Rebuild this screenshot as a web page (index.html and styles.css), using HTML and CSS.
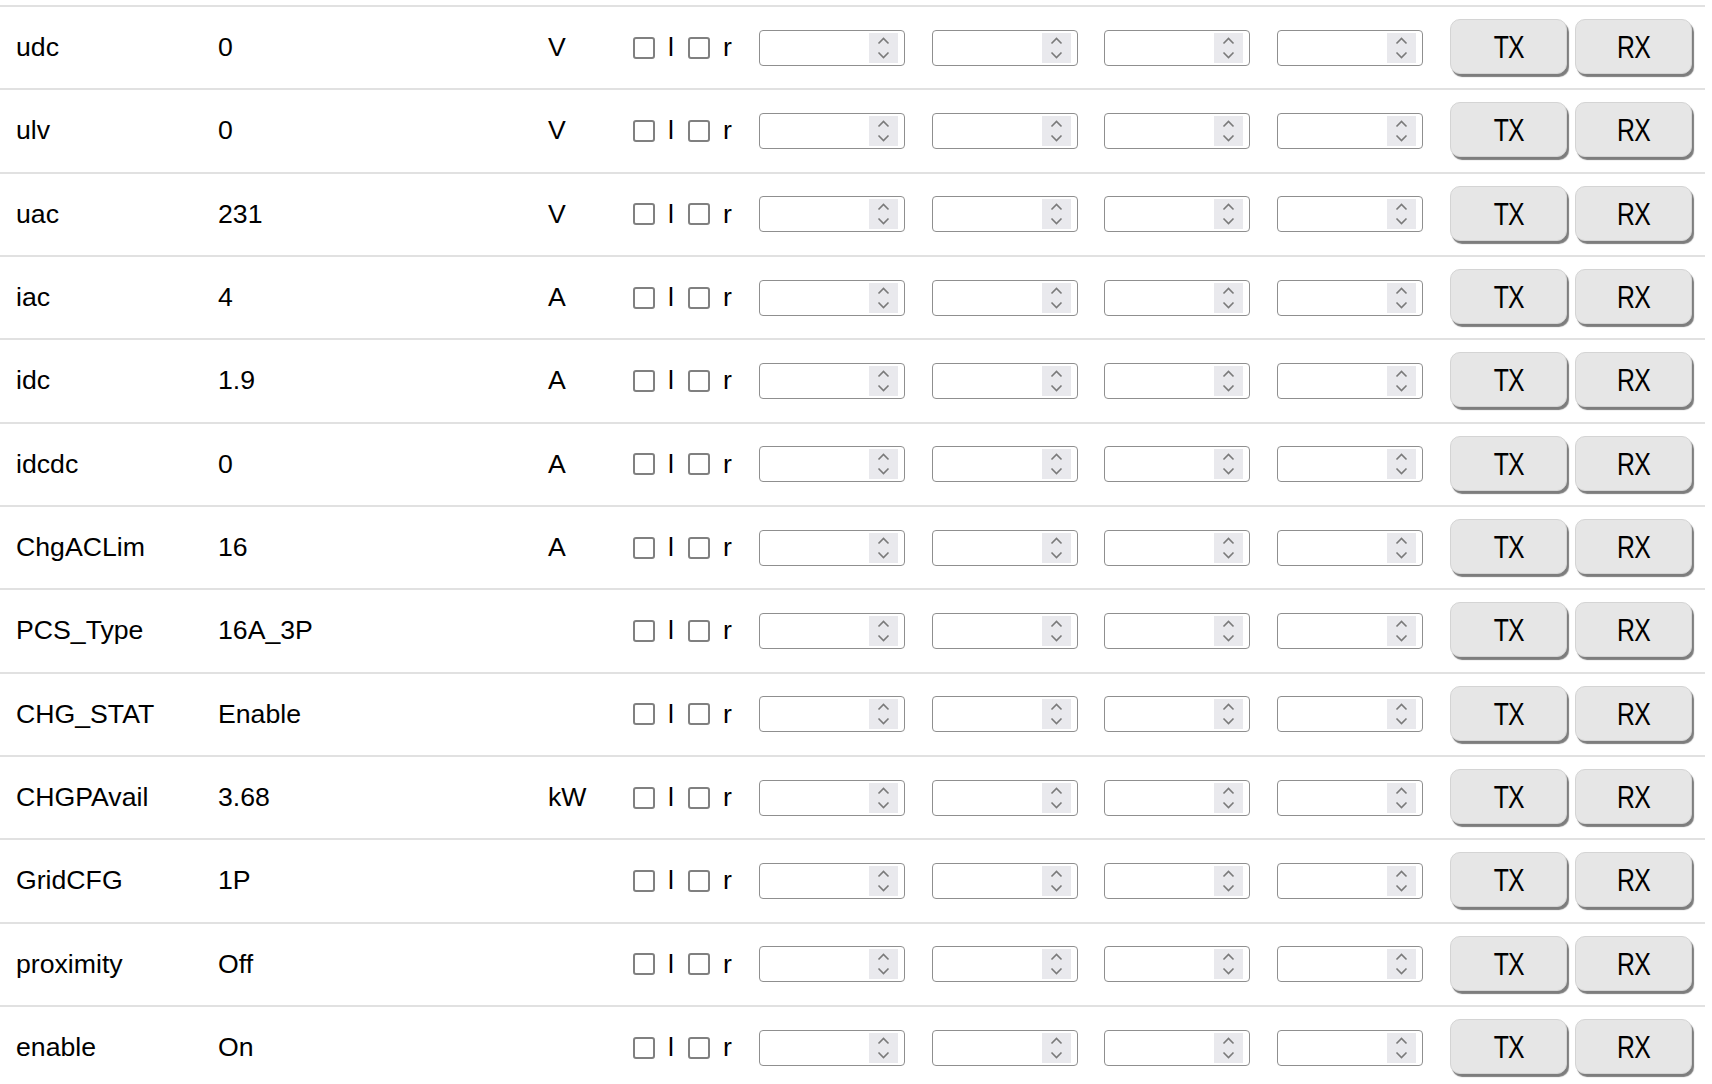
FILE: index.html
```html
<!DOCTYPE html>
<html>
<head>
<meta charset="utf-8">
<link rel="stylesheet" href="styles.css">
</head>
<body>
<div class="table">
  <div class="row"><div class="c name">udc</div><div class="c value">0</div><div class="c unit">V</div><div class="c flags"><label class="flag"><input type="checkbox" class="cb">l</label><label class="flag"><input type="checkbox" class="cb">r</label></div><div class="c field"><div class="num"><input type="number" class="numin"><span class="spin"><svg width="29" height="30" viewBox="0 0 29 30"><path d="M9.5 10.5L14.5 5.5L19.5 10.5M9.5 19.5L14.5 24.5L19.5 19.5" fill="none" stroke="#7a7a7a" stroke-width="1.6"/></svg></span></div></div><div class="c field"><div class="num"><input type="number" class="numin"><span class="spin"><svg width="29" height="30" viewBox="0 0 29 30"><path d="M9.5 10.5L14.5 5.5L19.5 10.5M9.5 19.5L14.5 24.5L19.5 19.5" fill="none" stroke="#7a7a7a" stroke-width="1.6"/></svg></span></div></div><div class="c field"><div class="num"><input type="number" class="numin"><span class="spin"><svg width="29" height="30" viewBox="0 0 29 30"><path d="M9.5 10.5L14.5 5.5L19.5 10.5M9.5 19.5L14.5 24.5L19.5 19.5" fill="none" stroke="#7a7a7a" stroke-width="1.6"/></svg></span></div></div><div class="c field"><div class="num"><input type="number" class="numin"><span class="spin"><svg width="29" height="30" viewBox="0 0 29 30"><path d="M9.5 10.5L14.5 5.5L19.5 10.5M9.5 19.5L14.5 24.5L19.5 19.5" fill="none" stroke="#7a7a7a" stroke-width="1.6"/></svg></span></div></div><div class="c actions"><button class="btn"><span class="btxt">TX</span></button><button class="btn"><span class="btxt">RX</span></button></div></div>
</div>
<script src="rows.js"></script>
</body>
</html>
```

FILE: rows.js
```js
(function () {
  var data = [
    ["ulv", "0", "V"],
    ["uac", "231", "V"],
    ["iac", "4", "A"],
    ["idc", "1.9", "A"],
    ["idcdc", "0", "A"],
    ["ChgACLim", "16", "A"],
    ["PCS_Type", "16A_3P", ""],
    ["CHG_STAT", "Enable", ""],
    ["CHGPAvail", "3.68", "kW"],
    ["GridCFG", "1P", ""],
    ["proximity", "Off", ""],
    ["enable", "On", ""]
  ];
  var table = document.querySelector(".table");
  var tpl = table.querySelector(".row");
  data.forEach(function (d) {
    var r = tpl.cloneNode(true);
    r.querySelector(".name").textContent = d[0];
    r.querySelector(".value").textContent = d[1];
    r.querySelector(".unit").textContent = d[2];
    table.appendChild(r);
  });
})();
```

FILE: styles.css
```css
html, body {
  margin: 0;
  padding: 0;
  background: #ffffff;
}
body {
  padding-top: 5px;
  font-family: "Liberation Sans", Arial, sans-serif;
  font-size: 26.67px;
  color: #000000;
}
.table {
  width: 1705px;
}
.row {
  display: grid;
  grid-template-columns: 202px 330px 85px 129px 172.5px 172.5px 172.5px 172.5px 269px;
  align-items: center;
  height: 83.33px;
  box-sizing: border-box;
  border-top: 2px solid #e1e1e1;
}
.c {
  box-sizing: border-box;
  white-space: nowrap;
}
.name {
  padding-left: 16px;
}
.value, .unit {
  padding-left: 16px;
}
.flags {
  padding-left: 16px;
  display: flex;
  align-items: center;
  gap: 14px;
}
.flag {
  display: flex;
  align-items: center;
  gap: 13px;
}
.cb {
  appearance: none;
  -webkit-appearance: none;
  margin: 0;
  width: 22px;
  height: 22px;
  box-sizing: border-box;
  border: 2.5px solid #808080;
  border-radius: 3px;
  background: #fff;
}
.field {
  padding: 0 13px;
}
.num {
  display: flex;
  align-items: center;
  width: 146px;
  height: 36px;
  box-sizing: border-box;
  border: 1px solid #8f8f8f;
  border-radius: 4px;
  padding: 2px 6px 2px 0;
  background: #fff;
}
.numin {
  flex: 1;
  min-width: 0;
  border: none;
  outline: none;
  background: transparent;
  font-family: "Liberation Sans", Arial, sans-serif;
  font-size: 20px;
  padding: 0 6px;
  -moz-appearance: textfield;
}
.numin::-webkit-inner-spin-button,
.numin::-webkit-outer-spin-button {
  -webkit-appearance: none;
  margin: 0;
}
.spin {
  display: block;
  width: 29px;
  height: 30px;
  background: #e9e9ed;
}
.spin svg {
  display: block;
}
.actions {
  padding-left: 14px;
  display: flex;
  gap: 8px;
  align-items: center;
}
.btn {
  width: 117px;
  height: 55px;
  box-sizing: border-box;
  margin: 0;
  padding: 3px 0 0 0;
  background: #e6e6e6;
  border: 1px solid #d4d4d4;
  border-radius: 10px;
  box-shadow: 2px 3px 1px #7d7d7d;
  font-family: "Liberation Sans", Arial, sans-serif;
  font-size: 31px;
  color: #000;
  transform: translateY(-1px);
}
.btxt {
  display: inline-block;
  transform: scaleX(0.8);
  letter-spacing: -1px;
}
```
